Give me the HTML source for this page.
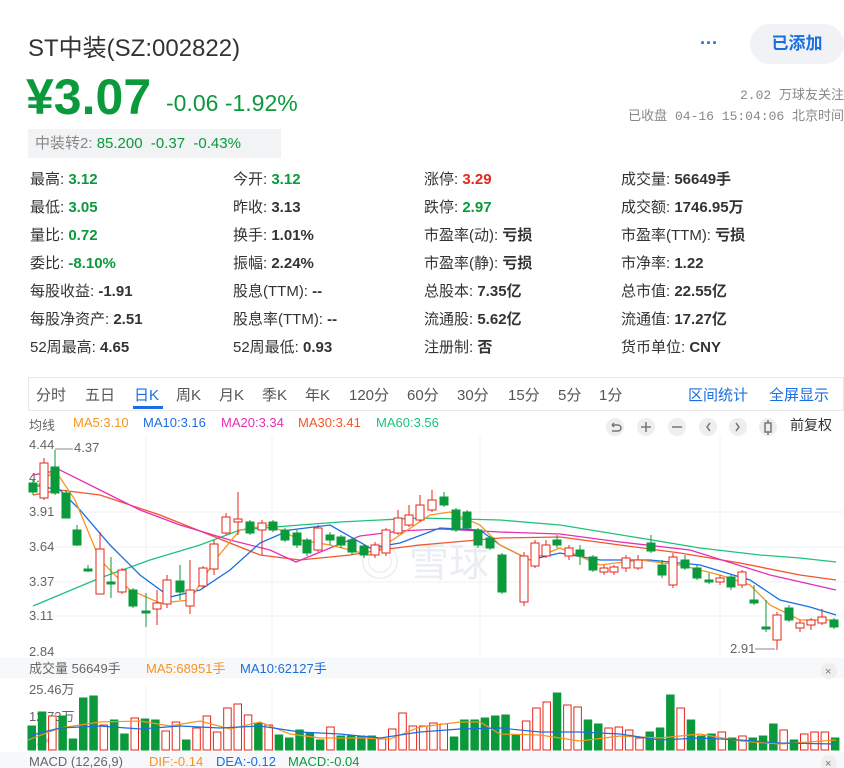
<!DOCTYPE html>
<html><head><meta charset="utf-8"><style>
*{margin:0;padding:0;box-sizing:border-box}
body{width:844px;height:768px;overflow:hidden;background:#fff;font-family:"Liberation Sans","Noto Sans CJK SC",sans-serif;color:#333;position:relative}
.a{position:absolute;white-space:nowrap}
.g{color:#0a9a3c}.r{color:#e5261b}
.st{font-size:15px;line-height:20px}
.st b{font-weight:bold;color:#333}
.st b.g{color:#0a9a3c}.st b.r{color:#e5261b}
.tab{font-size:15px;color:#555;top:384px}
.lg{font-size:13px;top:415px}
</style></head><body>
<div class="a" style="left:28px;top:28px;font-size:24px;color:#333">ST中装(SZ:002822)</div>
<div class="a" style="left:700px;top:38px;font-size:18px;color:#1a6ee0;font-weight:bold;line-height:10px">···</div>
<div class="a" style="left:750px;top:24px;width:94px;height:40px;border-radius:20px;background:#f0f2f5;color:#1a6ee0;font-size:17px;font-weight:bold;text-align:center;line-height:40px">已添加</div>
<div class="a g" style="left:26px;top:69px;font-size:50px;font-weight:bold;line-height:56px">¥3.07</div>
<div class="a g" style="left:166px;top:90px;font-size:23px">-0.06 -1.92%</div>
<div class="a" style="right:0;top:84px;font-size:13px;color:#888;font-family:'Liberation Mono','Noto Sans CJK SC',monospace">2.02 万球友关注</div>
<div class="a" style="right:0;top:105px;font-size:13px;color:#888;font-family:'Liberation Mono','Noto Sans CJK SC',monospace">已收盘 04-16 15:04:06 北京时间</div>
<div class="a" style="left:28px;top:129px;width:253px;height:29px;background:#f2f3f5;font-size:15px;line-height:29px;padding-left:7px;color:#888">中装转2: <span class="g">85.200 &nbsp;-0.37 &nbsp;-0.43%</span></div>

<div class="a st" style="left:30px;top:170px">最高: <b class="g">3.12</b></div>
<div class="a st" style="left:30px;top:198px">最低: <b class="g">3.05</b></div>
<div class="a st" style="left:30px;top:226px">量比: <b class="g">0.72</b></div>
<div class="a st" style="left:30px;top:254px">委比: <b class="g">-8.10%</b></div>
<div class="a st" style="left:30px;top:282px">每股收益: <b>-1.91</b></div>
<div class="a st" style="left:30px;top:310px">每股净资产: <b>2.51</b></div>
<div class="a st" style="left:30px;top:338px">52周最高: <b>4.65</b></div>
<div class="a st" style="left:233px;top:170px">今开: <b class="g">3.12</b></div>
<div class="a st" style="left:233px;top:198px">昨收: <b>3.13</b></div>
<div class="a st" style="left:233px;top:226px">换手: <b>1.01%</b></div>
<div class="a st" style="left:233px;top:254px">振幅: <b>2.24%</b></div>
<div class="a st" style="left:233px;top:282px">股息(TTM): <b>--</b></div>
<div class="a st" style="left:233px;top:310px">股息率(TTM): <b>--</b></div>
<div class="a st" style="left:233px;top:338px">52周最低: <b>0.93</b></div>
<div class="a st" style="left:424px;top:170px">涨停: <b class="r">3.29</b></div>
<div class="a st" style="left:424px;top:198px">跌停: <b class="g">2.97</b></div>
<div class="a st" style="left:424px;top:226px">市盈率(动): <b>亏损</b></div>
<div class="a st" style="left:424px;top:254px">市盈率(静): <b>亏损</b></div>
<div class="a st" style="left:424px;top:282px">总股本: <b>7.35亿</b></div>
<div class="a st" style="left:424px;top:310px">流通股: <b>5.62亿</b></div>
<div class="a st" style="left:424px;top:338px">注册制: <b>否</b></div>
<div class="a st" style="left:621px;top:170px">成交量: <b>56649手</b></div>
<div class="a st" style="left:621px;top:198px">成交额: <b>1746.95万</b></div>
<div class="a st" style="left:621px;top:226px">市盈率(TTM): <b>亏损</b></div>
<div class="a st" style="left:621px;top:254px">市净率: <b>1.22</b></div>
<div class="a st" style="left:621px;top:282px">总市值: <b>22.55亿</b></div>
<div class="a st" style="left:621px;top:310px">流通值: <b>17.27亿</b></div>
<div class="a st" style="left:621px;top:338px">货币单位: <b>CNY</b></div>

<div class="a" style="left:28px;top:377px;width:816px;height:34px;border:1px solid #e8e8e8"></div>
<div class="a tab" style="left:36px">分时</div>
<div class="a tab" style="left:85px">五日</div>
<div class="a tab" style="left:134px;color:#1a6ee0">日K</div>
<div class="a" style="left:133px;top:406px;width:30px;height:3px;background:#1a6ee0"></div>
<div class="a tab" style="left:176px">周K</div>
<div class="a tab" style="left:219px">月K</div>
<div class="a tab" style="left:262px">季K</div>
<div class="a tab" style="left:305px">年K</div>
<div class="a tab" style="left:349px">120分</div>
<div class="a tab" style="left:407px">60分</div>
<div class="a tab" style="left:457px">30分</div>
<div class="a tab" style="left:508px">15分</div>
<div class="a tab" style="left:558px">5分</div>
<div class="a tab" style="left:599px">1分</div>
<div class="a tab" style="left:688px;color:#1a6ee0">区间统计</div>
<div class="a tab" style="left:769px;color:#1a6ee0">全屏显示</div>

<div class="a lg" style="left:29px;color:#666">均线</div>
<div class="a lg" style="left:73px;color:#f7931e">MA5:3.10</div>
<div class="a lg" style="left:143px;color:#1a6ee0">MA10:3.16</div>
<div class="a lg" style="left:221px;color:#e62fb5">MA20:3.34</div>
<div class="a lg" style="left:298px;color:#f2552c">MA30:3.41</div>
<div class="a lg" style="left:376px;color:#1ec27a">MA60:3.56</div>
<svg class="a" style="left:604px;top:416px" width="180" height="22">
<g fill="#eee"><circle cx="11" cy="11" r="9"/><circle cx="42" cy="11" r="9"/><circle cx="73" cy="11" r="9"/><circle cx="104" cy="11" r="9"/><circle cx="134" cy="11" r="9"/><circle cx="164" cy="11" r="9"/></g>
<g stroke="#777" stroke-width="1.5" fill="none"><path d="M8 9h6a3 3 0 0 1 0 6h-6M8 9l2-2M8 9l2 2"/><path d="M37 11h10M42 6v10"/><path d="M68 11h10"/><path d="M106 7l-3 4 3 4"/><path d="M132 7l3 4-3 4"/><rect x="161" y="7" width="6" height="9"/><path d="M164 4v3M164 16v3"/></g>
</svg>
<div class="a lg" style="left:790px;color:#333;font-size:14px">前复权</div>

<svg class="a" style="left:0;top:436px" width="844" height="332">
<g stroke="#f0f0f0" stroke-width="1">
<line x1="28" y1="76" x2="844" y2="76"/><line x1="28" y1="111" x2="844" y2="111"/><line x1="28" y1="146" x2="844" y2="146"/><line x1="28" y1="180" x2="844" y2="180"/>
<line x1="146" y1="0" x2="146" y2="222"/><line x1="272" y1="0" x2="272" y2="222"/><line x1="480" y1="0" x2="480" y2="222"/><line x1="720" y1="0" x2="720" y2="222"/>
<line x1="146" y1="250" x2="146" y2="316"/><line x1="272" y1="250" x2="272" y2="316"/><line x1="480" y1="250" x2="480" y2="316"/><line x1="720" y1="250" x2="720" y2="316"/>
</g>
<rect x="0" y="222" width="844" height="20" fill="#f7f8fa"/>
<rect x="0" y="316" width="844" height="16" fill="#f7f8fa"/>
<g font-size="13" fill="#666" font-family="Liberation Sans">
<text x="29" y="13">4.44</text><text x="29" y="80">3.91</text><text x="29" y="115">3.64</text><text x="29" y="150">3.37</text><text x="29" y="184">3.11</text><text x="29" y="220">2.84</text>
<text x="29" y="46">4.1</text>
<text x="74" y="16">4.37</text><line x1="55" y1="13" x2="73" y2="13" stroke="#888"/>
<text x="730" y="217">2.91</text><line x1="755" y1="213" x2="775" y2="213" stroke="#888"/>
<text x="29" y="258">25.46万</text><text x="29" y="285">12.73万</text><text x="29" y="309">0.00</text>
</g>
<text x="360" y="140" font-size="40" fill="#eaedf2" font-family="Noto Sans CJK SC">◎ 雪球</text>
<g fill="none" stroke-width="1.3">
<polyline stroke="#1ec27a" points="33,170 100,142 150,124 200,109 240,94 300,89 340,86 420,82 500,84 560,89 640,102 700,112 760,119 800,122 836,126"/>
<polyline stroke="#f2552c" points="33,59 60,54 100,59 160,79 210,99 260,119 300,124 350,119 380,114 420,109 500,102 560,101 620,109 680,117 740,127 800,139 836,144"/>
<polyline stroke="#e62fb5" points="33,39 60,34 100,54 140,74 180,89 230,104 270,114 296,126 330,112 360,100 400,95 440,93 500,96 560,98 620,106 690,114 770,139 836,154"/>
<polyline stroke="#1a6ee0" points="33,49 60,54 80,74 110,109 140,139 170,161 200,154 230,134 260,107 290,94 330,89 370,112 400,107 440,92 480,94 500,109 530,124 560,117 600,124 650,124 700,129 750,144 780,164 810,171 836,179"/>
<polyline stroke="#f7931e" points="33,54 55,34 75,64 100,124 130,154 160,167 190,164 215,124 240,94 270,89 300,104 330,109 370,119 400,99 430,79 450,76 480,89 500,109 530,124 560,112 600,129 640,124 680,129 720,139 750,149 770,169 800,184 836,184"/>
</g>
<g id="c" stroke-width="1"></g>
<g id="v"></g>
<g fill="none" stroke-width="1.2">
<polyline stroke="#f7931e" points="28,304 60,292 100,286 140,285 170,290 200,285 230,293 260,286 290,298 320,302 360,302 390,303 420,291 460,286 480,286 500,298 540,299 580,305 620,300 660,302 700,298 740,305 780,308 836,304"/>
<polyline stroke="#1a6ee0" points="28,300 60,292 100,290 140,293 180,290 220,292 260,290 300,296 340,298 380,302 420,296 460,293 500,292 540,296 580,296 620,298 660,304 700,302 740,304 780,307 836,308"/>
</g>
<g font-size="13" font-family="Liberation Sans,Noto Sans CJK SC">
<text x="29" y="237" fill="#666">成交量 56649手</text><text x="146" y="237" fill="#f7931e">MA5:68951手</text><text x="240" y="237" fill="#1a6ee0">MA10:62127手</text>
<text x="29" y="330" fill="#666">MACD (12,26,9)</text><text x="149" y="330" fill="#f7931e">DIF:-0.14</text><text x="216" y="330" fill="#1a6ee0">DEA:-0.12</text><text x="288" y="330" fill="#0a9a3c">MACD:-0.04</text>
</g>
<circle cx="829" cy="235" r="8" fill="#eee"/><text x="825" y="239" font-size="11" fill="#777">×</text>
<circle cx="829" cy="327" r="8" fill="#eee"/><text x="825" y="331" font-size="11" fill="#777">×</text>
</svg>
<script>
var C=[[33,'g',483,492,480,495],[44,'r',463,498,458,500],[55,'g',467,493,450,495],[66,'g',493,518,490,518],[77,'g',530,545,525,546],[88,'g',569,571,565,572],[100,'r',549,594,532,594],[111,'g',582,584,557,598],[122,'r',570,592,568,594],[133,'g',590,606,588,608],[146,'g',611,613,593,627],[157,'r',603,609,590,625],[167,'r',580,604,575,608],[180,'g',581,592,565,600],[190,'r',590,606,560,614],[203,'r',568,586,566,588],[214,'r',544,569,540,575],[226,'r',517,533,513,535],[238,'r',519,522,492,535],[250,'g',522,533,520,535],[262,'r',523,530,520,555],[273,'g',522,530,520,532],[285,'g',530,540,528,542],[297,'g',533,545,530,548],[307,'g',540,553,538,556],[318,'r',528,550,525,552],[330,'g',535,540,532,545],[341,'g',537,545,535,548],[352,'g',540,552,538,555],[364,'g',546,555,544,558],[375,'r',545,555,542,558],[386,'r',530,553,528,556],[398,'r',518,533,510,535],[409,'r',515,525,505,527],[420,'r',505,520,495,522],[432,'r',500,510,490,512],[444,'g',497,505,492,507],[456,'g',510,530,508,532],[467,'g',512,528,510,530],[478,'g',530,545,528,548],[490,'g',538,548,536,550],[502,'g',555,592,553,594],[524,'r',556,602,552,606],[535,'r',543,566,540,568],[546,'r',545,556,540,558],[557,'g',540,545,535,548],[569,'r',548,556,545,560],[580,'g',550,556,545,565],[593,'g',557,570,555,572],[604,'r',568,572,565,575],[614,'r',567,572,565,575],[626,'r',558,568,555,572],[638,'r',560,568,555,570],[651,'g',543,551,535,553],[662,'g',565,575,560,578],[673,'r',557,585,553,588],[685,'g',560,568,555,570],[697,'g',568,578,565,580],[709,'g',580,582,573,584],[720,'r',578,582,575,585],[731,'g',577,587,575,590],[742,'r',572,585,570,588],[754,'g',600,603,585,605],[766,'g',627,629,600,632],[777,'r',615,640,612,650],[789,'g',608,620,605,622],[800,'r',623,628,620,632],[811,'r',620,625,618,630],[822,'r',617,623,609,625],[834,'g',620,627,618,629]];
var s='';C.forEach(function(c){var col=c[1]=='r'?'#e5261b':'#0a9a3c';var y=436;s+='<line x1="'+c[0]+'" x2="'+c[0]+'" y1="'+(c[4]-y)+'" y2="'+(c[5]-y)+'" stroke="'+col+'"/>';var h=Math.max(1,c[3]-c[2]);s+='<rect x="'+(c[0]-4)+'" y="'+(c[2]-y)+'" width="8" height="'+h+'" fill="'+(c[1]=='r'?'#fff':col)+'" stroke="'+col+'"/>';});
document.getElementById('c').innerHTML=s;
var V=[24,38,34,34,11,52,54,25,30,16,32,31,30,19,28,10,22,34,18,42,46,35,27,25,15,12,20,17,10,23,14,14,14,14,11,21,37,24,24,27,26,13,30,30,32,34,35,15,29,42,48,57,45,43,30,26,22,23,20,12,18,22,55,42,30,14,16,18,12,14,12,14,26,20,10,16,18,18,12];
var vs='';V.forEach(function(h,i){var x=28+i*10.3;var c=C[Math.min(C.length-1,Math.floor(i*C.length/V.length))][1];var col=c=='r'?'#e5261b':'#0a9a3c';vs+='<rect x="'+x+'" y="'+(314-h)+'" width="7.5" height="'+h+'" fill="'+(c=='r'?'#fff':col)+'" stroke="'+col+'" stroke-width="1"/>';});
document.getElementById('v').innerHTML=vs;
</script>
</body></html>
